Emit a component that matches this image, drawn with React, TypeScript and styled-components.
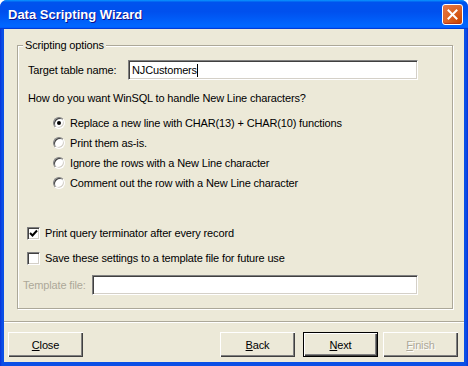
import React from "react";
import styled, { createGlobalStyle } from "styled-components";

const GlobalStyle = createGlobalStyle`
  html, body { margin: 0; padding: 0; background: #ffffff; overflow: hidden; }
  body { font-family: "Liberation Sans", Arial, sans-serif; font-size: 11px; color: #000; letter-spacing: -0.15px; }
  * { box-sizing: border-box; }
`;

const Window = styled.div`
  width: 468px;
  height: 366px;
  display: flex;
  flex-direction: column;
  background: linear-gradient(90deg, #0831d9 0px, #0a4fe6 2px, #0a4fe6 calc(100% - 2px), #0831d9 100%);
  border-radius: 7px 7px 0 0;
  overflow: hidden;
`;

const TitleBar = styled.div`
  height: 29px;
  flex: none;
  display: flex;
  align-items: center;
  justify-content: space-between;
  padding: 0 5px 0 8px;
  background: linear-gradient(180deg, #0997ff 0%, #0053ee 8%, #0050ee 40%, #0066ff 88%, #0066ff 93%, #005bff 95%, #003dd7 96%, #003dd7 100%);
`;

const Title = styled.span`
  font-family: "Liberation Sans", Arial, sans-serif;
  font-weight: bold;
  font-size: 13px;
  color: #ffffff;
  text-shadow: 1px 1px #0f1089;
  letter-spacing: 0;
`;

const CloseBox = styled.div`
  width: 21px;
  height: 21px;
  border: 1px solid #ffffff;
  border-radius: 3px;
  background: radial-gradient(circle at 90% 90%, #cc4600 0%, #dc6527 55%, #e7794a 100%);
  display: flex;
  align-items: center;
  justify-content: center;
  box-shadow: inset 0 -1px 1px #b5331a;
`;

const Client = styled.div`
  flex: 1;
  margin: 0 4px 4px;
  background: #ece9d8;
  display: flex;
  flex-direction: column;
`;

const GroupBox = styled.fieldset`
  margin: 10px 11px 0 13px;
  padding: 8px 34px 13px 10px;
  border: 1px solid #aca899;
  box-shadow: inset 1px 1px 0 #ffffff, 1px 1px 0 #ffffff;
  min-width: 0;
`;

const Legend = styled.legend`
  margin-left: -5px;
  padding: 0 2px;
  line-height: 13px;
  background: #ece9d8;
`;

const FieldRow = styled.div<{ $offset?: number; $top?: number }>`
  display: flex;
  align-items: center;
  height: 20px;
  margin-left: ${(p) => p.$offset ?? 0}px;
  margin-top: ${(p) => p.$top ?? 0}px;
`;

const FieldLabel = styled.span<{ $width: number; $disabled?: boolean }>`
  width: ${(p) => p.$width}px;
  flex: none;
  color: ${(p) => (p.$disabled ? "#aca899" : "#000")};
  white-space: nowrap;
`;

const TextBox = styled.div`
  flex: 1;
  height: 20px;
  background: #ffffff;
  border-top: 1px solid #808080;
  border-left: 1px solid #808080;
  border-right: 1px solid #ffffff;
  border-bottom: 1px solid #ffffff;
  box-shadow: inset 1px 1px 0 #404040, inset -1px -1px 0 #d4d0c8;
  display: flex;
  align-items: center;
  padding-left: 3px;
  white-space: nowrap;
`;

const Caret = styled.span`
  display: inline-block;
  width: 1px;
  height: 13px;
  background: #000;
`;

const Question = styled.div`
  margin-top: 12px;
  line-height: 13px;
`;

const OptionList = styled.div`
  margin-top: 8px;
  padding-left: 25px;
  display: flex;
  flex-direction: column;
`;

const OptionRow = styled.div`
  display: flex;
  align-items: center;
  gap: 5px;
  height: 20px;
  white-space: nowrap;
`;

const Radio = styled.span<{ $checked?: boolean }>`
  width: 12px;
  height: 12px;
  flex: none;
  border-radius: 50%;
  background: #ffffff;
  border: 1px solid;
  border-color: #808080 #ffffff #ffffff #808080;
  box-shadow: inset 1px 1px 0 #404040, inset -1px -1px 0 #d4d0c8;
  position: relative;
  &::after {
    content: "";
    display: ${(p) => (p.$checked ? "block" : "none")};
    position: absolute;
    left: 3px;
    top: 3px;
    width: 4px;
    height: 4px;
    border-radius: 50%;
    background: #000;
  }
`;

const CheckBox = styled.span`
  width: 13px;
  height: 13px;
  flex: none;
  background: #ffffff;
  border: 1px solid;
  border-color: #808080 #ffffff #ffffff #808080;
  box-shadow: inset 1px 1px 0 #404040, inset -1px -1px 0 #d4d0c8;
  display: flex;
  align-items: center;
  justify-content: center;
`;

const CheckRow = styled.div<{ $top: number }>`
  display: flex;
  align-items: center;
  gap: 5px;
  height: 20px;
  margin-left: -1px;
  margin-top: ${(p) => p.$top}px;
  white-space: nowrap;
`;

const Separator = styled.div`
  margin-top: 12px;
  height: 2px;
  border-top: 1px solid #aca899;
  border-bottom: 1px solid #ffffff;
`;

const ButtonBar = styled.div`
  margin-top: 9px;
  display: flex;
  align-items: center;
  padding: 0 6px 0 4px;
  gap: 5px;
`;

const Spacer = styled.div`
  flex: 1;
`;

const Button = styled.div<{ $default?: boolean; $disabled?: boolean; $gapAfter?: number }>`
  width: 75px;
  height: 25px;
  display: flex;
  align-items: center;
  justify-content: center;
  background: #ece9d8;
  color: ${(p) => (p.$disabled ? "#aca899" : "#000")};
  border: ${(p) => (p.$default ? "1px solid #000" : "none")};
  box-shadow: inset 1px 1px 0 #ffffff, inset -1px -1px 0 #404040, inset -2px -2px 0 #808080;
  margin-right: ${(p) => p.$gapAfter ?? 0}px;
  font-size: 11px;
  text-shadow: ${(p) => (p.$disabled ? "1px 1px 0 #ffffff" : "none")};
  u { text-decoration: underline; }
`;

const options = [
  "Replace a new line with CHAR(13) + CHAR(10) functions",
  "Print them as-is.",
  "Ignore the rows with a New Line character",
  "Comment out the row with a New Line character",
];

export default function App() {
  return (
    <>
      <GlobalStyle />
      <Window>
        <TitleBar>
          <Title>Data Scripting Wizard</Title>
          <CloseBox>
            <svg width="11" height="11" viewBox="0 0 11 11">
              <path d="M1.5 1.5 L9.5 9.5 M9.5 1.5 L1.5 9.5" stroke="#ffffff" strokeWidth="2" strokeLinecap="square" />
            </svg>
          </CloseBox>
        </TitleBar>
        <Client>
          <GroupBox>
            <Legend>Scripting options</Legend>
            <FieldRow>
              <FieldLabel $width={100}>Target table name:</FieldLabel>
              <TextBox>
                NJCustomers
                <Caret />
              </TextBox>
            </FieldRow>
            <Question>How do you want WinSQL to handle New Line characters?</Question>
            <OptionList>
              {options.map((o, i) => (
                <OptionRow key={o}>
                  <Radio $checked={i === 0} />
                  <span>{o}</span>
                </OptionRow>
              ))}
            </OptionList>
            <CheckRow $top={30}>
              <CheckBox>
                <svg width="9" height="9" viewBox="0 0 9 9">
                  <path d="M1 4 L3.5 6.5 L8 1.5" fill="none" stroke="#000" strokeWidth="2" />
                </svg>
              </CheckBox>
              <span>Print query terminator after every record</span>
            </CheckRow>
            <CheckRow $top={5}>
              <CheckBox />
              <span>Save these settings to a template file for future use</span>
            </CheckRow>
            <FieldRow $offset={-5} $top={7}>
              <FieldLabel $width={69} $disabled>
                Template file:
              </FieldLabel>
              <TextBox />
            </FieldRow>
          </GroupBox>
          <Separator />
          <ButtonBar>
            <Button>
              <span>
                <u>C</u>lose
              </span>
            </Button>
            <Spacer />
            <Button $gapAfter={3}>
              <span>
                <u>B</u>ack
              </span>
            </Button>
            <Button $default>
              <span>
                <u>N</u>ext
              </span>
            </Button>
            <Button $disabled>
              <span>
                <u>F</u>inish
              </span>
            </Button>
          </ButtonBar>
        </Client>
      </Window>
    </>
  );
}
